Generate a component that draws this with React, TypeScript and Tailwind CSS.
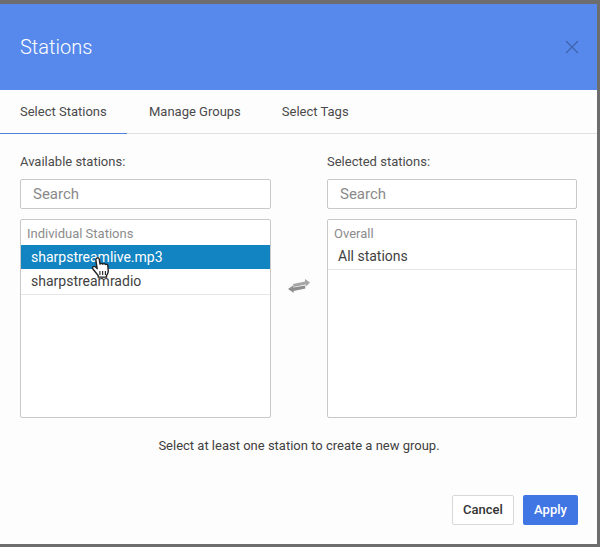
import { X } from "lucide-react";

const tabs = ["Select Stations", "Manage Groups", "Select Tags"];

function HandCursor() {
  return (
    <svg
      className="absolute left-[69px] top-[36px]"
      width="22"
      height="24"
      viewBox="0 0 20 24"
      preserveAspectRatio="none"
    >
      <path
        d="M6 2.200c1-.8 2.200-.3 2.400.9l.7 5c.5-.9 2-.9 2.500.1.6-.8 2-.7 2.400.3.8-.5 2-.1 2.200 1l.4 5.500c.1 2-.8 3.400-1.600 4.600v1.600H7.500v-1.500L3 13.500c-.8-1-1-2.200-.2-2.800.8-.6 1.800-.2 2.600.7l1.100 1.300L5.300 4.200c-.1-.8.100-1.500.7-2z"
        fill="#fff"
        stroke="#222"
        strokeWidth="1.300"
        strokeLinejoin="round"
      />
      <path d="M9 15v4M11.500 15v4M14 15v4" stroke="#222" strokeWidth="1" />
    </svg>
  );
}

function SwapIcon() {
  return (
    <svg width="22" height="15" viewBox="0 0 22 15" className="shrink-0">
      <path d="M5 5 17 2.400V0l5 3.400-4 4.200-.4-2.200L5.500 8z" fill="#a6a6a6" />
      <path d="M0 10 5 6.400l.3 2L17 6.400l.5 3.200L5.600 12l.2 2z" fill="#8f8f8f" />
    </svg>
  );
}

function Column({
  label,
  heading,
  width,
  children,
}: {
  label: string;
  heading: string;
  width: string;
  children: React.ReactNode;
}) {
  return (
    <div className={`flex flex-col ${width}`}>
      <div className="h-[20px] text-[13px] leading-[20px] text-[#4a4a4a]">{label}</div>
      <div className="mt-[7px] flex h-[30px] items-center rounded-[2px] border border-[#c9c9c9] bg-white pl-[12px] text-[15px] text-[#8a8a8a]">
        Search
      </div>
      <div className="relative mt-[10px] h-[199px] rounded-[2px] border border-[#c9c9c9] bg-white">
        <div className="h-[25px] pl-[6px] pt-[5px] text-[13px] leading-[17px] text-[#8c8c8c]">
          {heading}
        </div>
        {children}
      </div>
    </div>
  );
}

function Row({ text, active }: { text: string; active?: boolean }) {
  return (
    <div
      className={
        active
          ? "h-[24px] bg-[#1284c2] pl-[10px] text-[14px] leading-[24px] text-white"
          : "h-[26px] border-b border-[#e6e6e6] pl-[10px] text-[14px] leading-[24px] text-[#3f3f3f]"
      }
    >
      {text}
    </div>
  );
}

export default function App() {
  return (
    <div className="h-[547px] w-[600px] overflow-hidden bg-[#6d6d6d] pr-[3px] pt-[4px] font-['Roboto',sans-serif]">
      <div className="flex h-[540px] flex-col bg-[#fefdfe]">
        <header className="flex h-[86px] items-center justify-between bg-[#5789ec] pl-[20px] pr-[14px]">
          <h1 className="text-[20px] font-light text-white">Stations</h1>
          <X size={22} strokeWidth={1.3} className="text-[#3f63ad]" />
        </header>

        <nav className="flex h-[44px] border-b border-[#e2e2e6]">
          {tabs.map((tab, i) => (
            <div
              key={tab}
              className={
                i === 0
                  ? "-mb-px flex w-[127px] items-center border-b border-[#4f80dc] pl-[20px] text-[13px] text-[#4a4a4a]"
                  : "flex items-center pl-[22px] pr-[19px] text-[13px] text-[#4a4a4a]"
              }
            >
              {tab}
            </div>
          ))}
        </nav>

        <div className="flex items-start justify-between px-[20px] pt-[18px]">
          <Column label="Available stations:" heading="Individual Stations" width="w-[251px]">
            <Row text="sharpstreamlive.mp3" active />
            <Row text="sharpstreamradio" />
            <HandCursor />
          </Column>
          <div className="mt-[127px]">
            <SwapIcon />
          </div>
          <Column label="Selected stations:" heading="Overall" width="w-[250px]">
            <div className="h-[25px] border-b border-[#e6e6e6] pl-[10px] text-[14px] leading-[23px] text-[#3f3f3f]">
              All stations
            </div>
          </Column>
        </div>

        <p className="mt-[18px] pl-[1px] text-center text-[13px] leading-[20px] text-[#404040]">
          Select at least one station to create a new group.
        </p>

        <footer className="mt-[39px] flex justify-end gap-[9px] pr-[19px]">
          <button className="h-[30px] w-[62px] rounded-[2px] border border-[#d8d8d8] bg-white text-[13px] font-medium text-[#333]">
            Cancel
          </button>
          <button className="h-[30px] w-[55px] rounded-[2px] bg-[#3f76e4] text-[13px] font-medium text-white">
            Apply
          </button>
        </footer>
      </div>
    </div>
  );
}
